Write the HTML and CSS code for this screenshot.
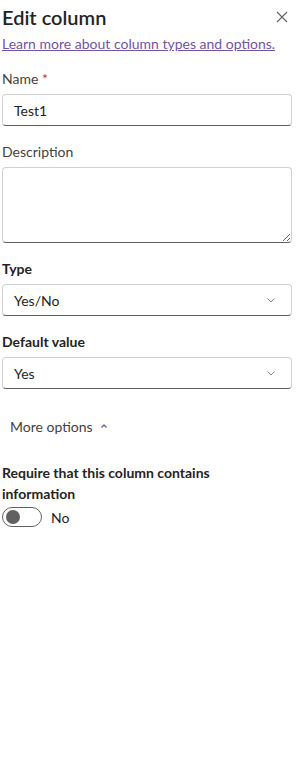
FILE: index.html
```html
<!DOCTYPE html>
<html lang="en">
<head>
    <meta charset="UTF-8">
    <meta name="viewport" content="width=device-width, initial-scale=1.0">
    <title>Edit column</title>
    <link rel="stylesheet" href="styles.css">
</head>
<body>
    <!-- Panel edit kolom -->
    <div class="panel">
        <div class="header">
            <h1>Edit column</h1>
            <button class="close-btn" aria-label="Close">
                <svg width="12" height="12" viewBox="0 0 12 12">
                    <path d="M1 1 L11 11 M11 1 L1 11" stroke="#616161" stroke-width="1.1" fill="none"/>
                </svg>
            </button>
        </div>
        <a class="learn" href="#">Learn more about column types and options.</a>

        <div class="field">
            <label class="label">Name <span class="req">*</span></label>
            <input class="input" type="text" value="Test1">
        </div>

        <div class="field">
            <label class="label">Description</label>
            <textarea class="textarea"></textarea>
        </div>

        <div class="field">
            <label class="label bold">Type</label>
            <div class="select">
                <span>Yes/No</span>
                <svg width="12" height="12" viewBox="0 0 12 12">
                    <path d="M2.5 4.5 L6 8 L9.5 4.5" stroke="#8a8a8a" stroke-width="1" fill="none"/>
                </svg>
            </div>
        </div>

        <div class="field">
            <label class="label bold">Default value</label>
            <div class="select">
                <span>Yes</span>
                <svg width="12" height="12" viewBox="0 0 12 12">
                    <path d="M2.5 4.5 L6 8 L9.5 4.5" stroke="#8a8a8a" stroke-width="1" fill="none"/>
                </svg>
            </div>
        </div>

        <button class="more">
            More options
            <svg width="10" height="10" viewBox="0 0 10 10">
                <path d="M2.5 6.5 L5 4 L7.5 6.5" stroke="#6b5ea8" stroke-width="1.4" fill="none"/>
            </svg>
        </button>

        <div class="require">
            <div class="label bold">Require that this column contains information</div>
            <label class="toggle">
                <span class="track"><span class="knob"></span></span>
                No
            </label>
        </div>
    </div>
</body>
</html>
```

FILE: styles.css
```css
/* Reset */
* {
    margin: 0;
    padding: 0;
    box-sizing: border-box;
}

body {
    font-family: "Segoe UI", Lato, sans-serif;
    color: #242424;
    background: #fff;
    width: 308px;
}

.panel {
    width: 290px;
    margin-left: 2px;
    display: flex;
    flex-direction: column;
}

/* Header */
.header {
    display: flex;
    justify-content: space-between;
    align-items: center;
    height: 33px;
}

h1 {
    font-size: 20px;
    font-weight: 600;
    line-height: 28px;
}

.close-btn {
    border: none;
    background: transparent;
    width: 20px;
    height: 20px;
    display: flex;
    align-items: center;
    justify-content: center;
}

.learn {
    display: block;
    white-space: nowrap;
    font-size: 14px;
    color: #7254a6;
    line-height: 22px;
    margin-bottom: 14px;
}

/* Field */
.field {
    display: flex;
    flex-direction: column;
    margin-bottom: 16px;
}

.label {
    font-size: 14px;
    line-height: 20px;
    color: #424242;
    margin-bottom: 5px;
}

.label.bold {
    font-weight: 700;
    color: #242424;
}

.req {
    color: #c4314b;
}

.input,
.textarea,
.select {
    width: 290px;
    font-family: inherit;
    font-size: 14px;
    color: #242424;
    border: 1px solid #d1d1d1;
    border-bottom-color: #616161;
    border-radius: 4px;
    padding: 0 11px;
    background: #fff;
}

.input {
    height: 32px;
}

.textarea {
    height: 76px;
    resize: vertical;
}

.select {
    height: 32px;
    display: flex;
    align-items: center;
    justify-content: space-between;
    padding-right: 14px;
}

/* More options */
.more {
    align-self: flex-start;
    display: flex;
    align-items: center;
    gap: 6px;
    border: none;
    background: transparent;
    font-family: inherit;
    font-size: 14px;
    color: #424242;
    padding: 0 8px;
    height: 32px;
    margin-top: 5px;
    margin-bottom: 20px;
}

.require .label {
    margin-bottom: 0;
    line-height: 21px;
    max-width: 230px;
}

.toggle {
    display: flex;
    align-items: center;
    gap: 9px;
    font-size: 14px;
    color: #242424;
    margin-top: 3px;
}

.track {
    width: 40px;
    height: 20px;
    border: 1px solid #616161;
    border-radius: 10px;
    display: flex;
    align-items: center;
    padding-left: 3px;
}

.knob {
    width: 14px;
    height: 14px;
    border-radius: 50%;
    background: #616161;
}
```
